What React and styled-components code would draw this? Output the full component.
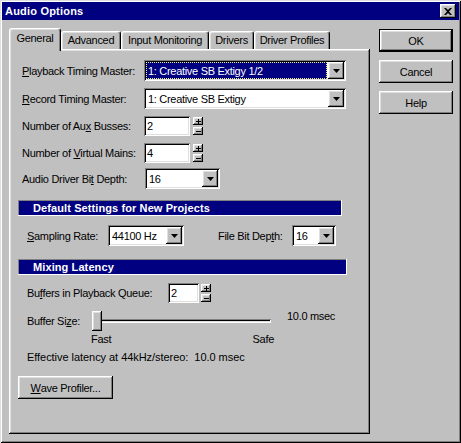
import React from 'react';
import styled, { createGlobalStyle, css } from 'styled-components';

const GlobalStyle = createGlobalStyle`
    html, body {
        margin: 0;
        padding: 0;
        background: #c0c0c0;
    }
    body {
        font-family: "Liberation Sans", Arial, sans-serif;
        font-size: 11px;
        letter-spacing: -0.3px;
        color: #000;
    }
`

const raised = css`
    background: #c0c0c0;
    box-shadow: inset -1px -1px #000, inset 1px 1px #fff, inset -2px -2px #808080, inset 2px 2px #dfdfdf;
`

const sunken = css`
    background: #fff;
    box-shadow: inset 1px 1px #808080, inset -1px -1px #fff, inset 2px 2px #000, inset -2px -2px #dfdfdf;
`

const Window = styled.div`
    width: 461px;
    height: 443px;
    box-sizing: border-box;
    padding: 2px;
    background: #c0c0c0;
    box-shadow: inset 1px 1px #dfdfdf, inset -1px -1px #000, inset 2px 2px #fff, inset -2px -2px #808080;
    display: flex;
    flex-direction: column;
`

const TitleBar = styled.div`
    height: 18px;
    flex: none;
    background: #000080;
    display: flex;
    align-items: center;
    justify-content: space-between;
    padding: 0 3px 0 3px;
`

const Title = styled.span`
    color: #fff;
    font-weight: bold;
    font-size: 11px;
    letter-spacing: 0.2px;
`

const CloseButton = styled.div`
    ${raised};
    width: 16px;
    height: 14px;
    display: flex;
    align-items: center;
    justify-content: center;
`

const Body = styled.div`
    flex: 1;
    display: flex;
    gap: 9px;
    padding: 8px 5px 7px 7px;
    min-height: 0;
`

const TabArea = styled.div`
    width: 361px;
    display: flex;
    flex-direction: column;
`

const TabStrip = styled.div`
    height: 21px;
    display: flex;
    align-items: flex-end;
    position: relative;
    z-index: 1;
`

const Tab = styled.div`
    box-sizing: border-box;
    width: ${p => p.$w}px;
    height: ${p => p.$active ? 23 : 18}px;
    margin-bottom: ${p => p.$active ? -2 : 0}px;
    padding-top: ${p => p.$active ? 3 : 2}px;
    text-align: center;
    background: #c0c0c0;
    border: 1px solid;
    border-color: #fff #000 transparent #fff;
    border-bottom: none;
    border-radius: 3px 3px 0 0;
    box-shadow: inset -1px 0 #808080, inset 1px 1px #dfdfdf;
    white-space: nowrap;
`

const Panel = styled.div`
    flex: 1;
    ${raised};
    padding: 11px 9px 0 9px;
    display: flex;
    flex-direction: column;
`

const ButtonColumn = styled.div`
    width: 74px;
    padding-top: 1px;
    display: flex;
    flex-direction: column;
    gap: 8px;
`

const PushButton = styled.div`
    box-sizing: border-box;
    width: ${p => p.$w || 74}px;
    height: ${p => p.$h || 23}px;
    ${raised};
    display: flex;
    align-items: center;
    justify-content: center;
    white-space: nowrap;
    ${p => p.$default && css`
        box-shadow: inset 1px 1px #000, inset -1px -1px #000, inset -2px -2px #000, inset 2px 2px #fff, inset -3px -3px #808080, inset 3px 3px #dfdfdf;
    `}
`

const Row = styled.div`
    display: flex;
    align-items: center;
    margin-top: ${p => p.$mt || 0}px;
    margin-left: ${p => p.$indent || 0}px;
`

const Label = styled.span`
    width: ${p => p.$w}px;
    margin-left: ${p => p.$ml || 0}px;
    flex: none;
    white-space: nowrap;
`

const ComboBox = styled.div`
    box-sizing: border-box;
    width: ${p => p.$w}px;
    height: 21px;
    ${sunken};
    padding: 2px;
    display: flex;
    align-items: stretch;
`

const ComboText = styled.div`
    flex: 1;
    display: flex;
    align-items: center;
    padding-left: 2px;
    margin-right: 1px;
    white-space: nowrap;
    ${p => p.$selected && css`
        background: #000080;
        color: #fff;
        outline: 1px dotted #f0f080;
        outline-offset: -1px;
    `}
`

const DropButton = styled.div`
    width: 16px;
    flex: none;
    ${raised};
    display: flex;
    align-items: center;
    justify-content: center;
`

const TextBox = styled.div`
    box-sizing: border-box;
    width: ${p => p.$w}px;
    height: 20px;
    ${sunken};
    padding-left: 3px;
    display: flex;
    align-items: center;
`

const Spinner = styled.div`
    display: flex;
    flex-direction: column;
    gap: 2px;
    margin-left: ${p => p.$gap || 3}px;
`

const SpinButton = styled.div`
    width: 10px;
    height: 8px;
    ${raised};
    display: flex;
    align-items: center;
    justify-content: center;
`

const SectionHeader = styled.div`
    box-sizing: border-box;
    width: ${p => p.$w}px;
    height: 16px;
    margin-top: ${p => p.$mt}px;
    background: #000080;
    box-shadow: inset -1px -1px #fff, inset 1px 1px #808080;
    color: #fff;
    font-weight: bold;
    padding-left: 15px;
    display: flex;
    align-items: center;
    letter-spacing: 0.1px;
`

const Slider = styled.div`
    position: relative;
    width: 179px;
    height: 20px;
    flex: none;
`

const Track = styled.div`
    position: absolute;
    left: 6px;
    right: 0;
    top: 8px;
    height: 4px;
    box-sizing: border-box;
    background: #c0c0c0;
    box-shadow: inset 1px 1px #808080, inset -1px -1px #fff, inset 2px 2px #000, inset -2px -2px #dfdfdf;
`

const Thumb = styled.div`
    position: absolute;
    left: ${p => p.$pos}px;
    top: 0;
    width: 10px;
    height: 20px;
    ${raised};
`

const Readout = styled.span`
    align-self: flex-start;
    margin-left: 16px;
    margin-top: -1px;
`

const TickRow = styled.div`
    width: 183px;
    margin-left: ${p => p.$indent}px;
    margin-top: 1px;
    display: flex;
    justify-content: space-between;
    line-height: 14px;
`

const Note = styled.div`
    margin-top: ${p => p.$mt}px;
    margin-left: ${p => p.$indent}px;
    line-height: 14px;
    letter-spacing: -0.05px;
`

const Arrow = () => (
    <svg width="7" height="4" viewBox="0 0 7 4">
        <path d="M0 0h7L3.5 4z" fill="#000" />
    </svg>
);

const Combo = ({ width, value, selected }) => (
    <ComboBox $w={width}>
        <ComboText $selected={selected}>{value}</ComboText>
        <DropButton><Arrow /></DropButton>
    </ComboBox>
);

const SpinField = ({ width, value, gap }) => (
    <>
        <TextBox $w={width}>{value}</TextBox>
        <Spinner $gap={gap}>
            <SpinButton>
                <svg width="5" height="5" viewBox="0 0 5 5"><path d="M2 0h1v5H2zM0 2h5v1H0z" fill="#000" /></svg>
            </SpinButton>
            <SpinButton>
                <svg width="5" height="1" viewBox="0 0 5 1"><path d="M0 0h5v1H0z" fill="#000" /></svg>
            </SpinButton>
        </Spinner>
    </>
);

const tabs = [
    { label: 'General', width: 52 },
    { label: 'Advanced', width: 60 },
    { label: 'Input Monitoring', width: 88 },
    { label: 'Drivers', width: 45 },
    { label: 'Driver Profiles', width: 76 },
];

export default class App extends React.Component {
    render() {
        return (
            <>
                <GlobalStyle />
                <Window>
                    <TitleBar>
                        <Title>Audio Options</Title>
                        <CloseButton>
                            <svg width="8" height="7" viewBox="0 0 8 7">
                                <path d="M0 0h2l2 2 2-2h2L5 3.5 8 7H6L4 5 2 7H0l3-3.5z" fill="#000" />
                            </svg>
                        </CloseButton>
                    </TitleBar>
                    <Body>
                        <TabArea>
                            <TabStrip>
                                {tabs.map((t, i) => (
                                    <Tab key={t.label} $w={t.width} $active={i === 0}>{t.label}</Tab>
                                ))}
                            </TabStrip>
                            <Panel>
                                <Row $indent={4}>
                                    <Label $w={122}><u>P</u>layback Timing Master:</Label>
                                    <Combo width={202} value="1: Creative SB Extigy 1/2" selected />
                                </Row>
                                <Row $indent={4} $mt={7}>
                                    <Label $w={122}><u>R</u>ecord Timing Master:</Label>
                                    <Combo width={202} value="1: Creative SB Extigy" />
                                </Row>
                                <Row $indent={4} $mt={7}>
                                    <Label $w={122}>Number of Au<u>x</u> Busses:</Label>
                                    <SpinField width={46} value="2" />
                                </Row>
                                <Row $indent={4} $mt={7}>
                                    <Label $w={122}>Number of <u>V</u>irtual Mains:</Label>
                                    <SpinField width={46} value="4" />
                                </Row>
                                <Row $indent={4} $mt={5}>
                                    <Label $w={123}>Audio Driver Bi<u>t</u> Depth:</Label>
                                    <Combo width={75} value="16" />
                                </Row>

                                <SectionHeader $w={324} $mt={11}>Default Settings for New Projects</SectionHeader>
                                <Row $indent={9} $mt={9}>
                                    <Label $w={81}><u>S</u>ampling Rate:</Label>
                                    <Combo width={76} value="44100 Hz" />
                                    <Label $w={74} $ml={34}>File Bit Dep<u>t</u>h:</Label>
                                    <Combo width={44} value="16" />
                                </Row>

                                <SectionHeader $w={329} $mt={13}>Mixing Latency</SectionHeader>
                                <Row $indent={9} $mt={8}>
                                    <Label $w={141}>Bu<u>f</u>fers in Playback Queue:</Label>
                                    <SpinField width={31} value="2" gap={2} />
                                </Row>
                                <Row $indent={9} $mt={8}>
                                    <Label $w={65}>Buffer Si<u>z</u>e:</Label>
                                    <Slider>
                                        <Track />
                                        <Thumb $pos={0} />
                                    </Slider>
                                    <Readout>10.0 msec</Readout>
                                </Row>
                                <TickRow $indent={73}>
                                    <span>Fast</span>
                                    <span>Safe</span>
                                </TickRow>
                                <Note $indent={9} $mt={4}>Effective latency at 44kHz/stereo:&nbsp; 10.0 msec</Note>
                                <Row $mt={12}>
                                    <PushButton $w={95}><u>W</u>ave Profiler...</PushButton>
                                </Row>
                            </Panel>
                        </TabArea>
                        <ButtonColumn>
                            <PushButton $default>OK</PushButton>
                            <PushButton>Cancel</PushButton>
                            <PushButton>Help</PushButton>
                        </ButtonColumn>
                    </Body>
                </Window>
            </>
        );
    }
};
